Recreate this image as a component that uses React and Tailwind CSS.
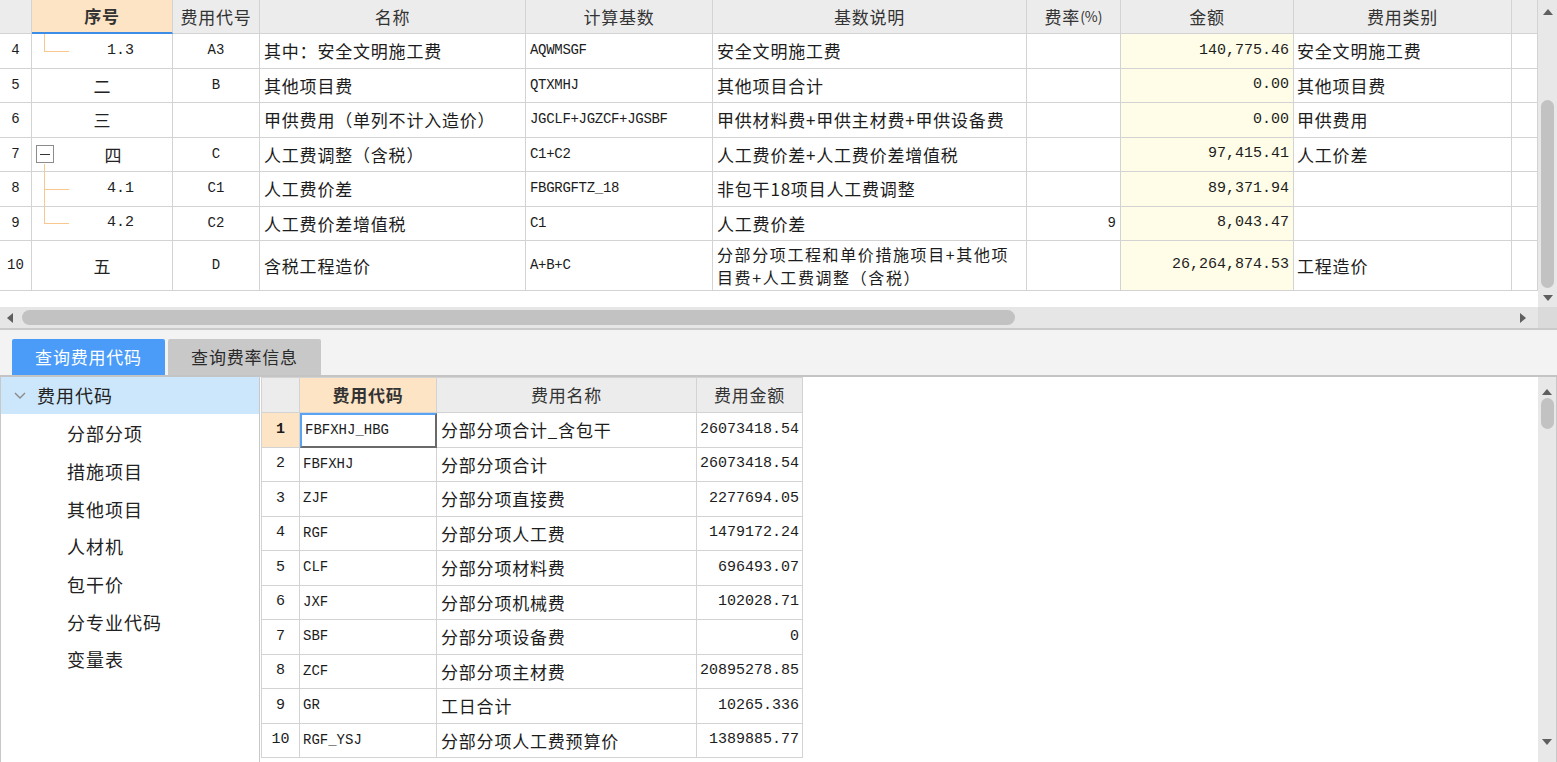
import React from "react";

const sans = "font-['Noto_Sans_CJK_SC',sans-serif]";
const mono = "font-['Liberation_Mono','Noto_Sans_CJK_SC',monospace]";

const topCols =
  "grid grid-cols-[32px_141px_87px_266px_187px_314px_94px_173px_218px_26px]";
const botCols = "grid grid-cols-[39px_137px_260px_106px]";

const Up = () => (
  <svg width="10" height="6" viewBox="0 0 10 6">
    <polygon points="0,6 5,0 10,6" fill="#5f5f5f" />
  </svg>
);
const Down = () => (
  <svg width="10" height="6" viewBox="0 0 10 6">
    <polygon points="0,0 5,6 10,0" fill="#5f5f5f" />
  </svg>
);
const Left = () => (
  <svg width="6" height="10" viewBox="0 0 6 10">
    <polygon points="6,0 0,5 6,10" fill="#5f5f5f" />
  </svg>
);
const Right = () => (
  <svg width="6" height="10" viewBox="0 0 6 10">
    <polygon points="0,0 6,5 0,10" fill="#5f5f5f" />
  </svg>
);

const rows = [
  { n: "4", seq: "1.3", tree: "last", code: "A3", name: "其中：安全文明施工费", base: "AQWMSGF", desc: "安全文明施工费", rate: "", amt: "140,775.46", cat: "安全文明施工费" },
  { n: "5", seq: "二", code: "B", name: "其他项目费", base: "QTXMHJ", desc: "其他项目合计", rate: "", amt: "0.00", cat: "其他项目费" },
  { n: "6", seq: "三", code: "", name: "甲供费用（单列不计入造价）", base: "JGCLF+JGZCF+JGSBF", desc: "甲供材料费+甲供主材费+甲供设备费", rate: "", amt: "0.00", cat: "甲供费用" },
  { n: "7", seq: "四", box: true, code: "C", name: "人工费调整（含税）", base: "C1+C2", desc: "人工费价差+人工费价差增值税", rate: "", amt: "97,415.41", cat: "人工价差" },
  { n: "8", seq: "4.1", tree: "mid", code: "C1", name: "人工费价差", base: "FBGRGFTZ_18", desc: "非包干18项目人工费调整", rate: "", amt: "89,371.94", cat: "" },
  { n: "9", seq: "4.2", tree: "last", code: "C2", name: "人工费价差增值税", base: "C1", desc: "人工费价差", rate: "9", amt: "8,043.47", cat: "" },
  { n: "10", seq: "五", code: "D", name: "含税工程造价", base: "A+B+C", desc: ["分部分项工程和单价措施项目+其他项", "目费+人工费调整（含税）"], rate: "", amt: "26,264,874.53", cat: "工程造价", tall: true },
];

const bot = [
  ["FBFXHJ_HBG", "分部分项合计_含包干", "26073418.54"],
  ["FBFXHJ", "分部分项合计", "26073418.54"],
  ["ZJF", "分部分项直接费", "2277694.05"],
  ["RGF", "分部分项人工费", "1479172.24"],
  ["CLF", "分部分项材料费", "696493.07"],
  ["JXF", "分部分项机械费", "102028.71"],
  ["SBF", "分部分项设备费", "0"],
  ["ZCF", "分部分项主材费", "20895278.85"],
  ["GR", "工日合计", "10265.336"],
  ["RGF_YSJ", "分部分项人工费预算价", "1389885.77"],
];

const treeItems = ["分部分项", "措施项目", "其他项目", "人材机", "包干价", "分专业代码", "变量表"];

const cell = "border-r border-b border-[#d3d3d3] flex items-center overflow-hidden whitespace-nowrap";

function SeqCell({ r }) {
  return (
    <div className={`${cell} relative`}>
      {r.tree && (
        <>
          <span
            className={`absolute left-[12px] top-0 w-px bg-[#f8c88e] ${r.tree === "mid" ? "h-full" : "h-1/2"}`}
          />
          <span className="absolute left-[12px] top-1/2 w-[25px] h-px bg-[#f8c88e]" />
        </>
      )}
      {r.box && <span className="absolute left-[12px] top-[26px] w-px h-[9px] bg-[#f8c88e]" />}
      {r.tree ? (
        <>
          <div className="w-[37px] shrink-0" />
          <div className={`flex-1 text-center ${mono} text-[15px] text-[#222]`}>{r.seq}</div>
        </>
      ) : r.box ? (
        <>
          <div className="w-[22px] shrink-0 flex items-center pl-[4px]">
            <div className="w-[18px] h-[18px] border border-[#8c8c8c] bg-white flex items-center justify-center">
              <div className="w-[10px] h-px bg-[#333]" />
            </div>
          </div>
          <div className={`flex-1 text-center ${sans} text-[17px] text-[#222]`}>{r.seq}</div>
        </>
      ) : (
        <div className={`flex-1 text-center ${sans} text-[17px] text-[#222]`}>{r.seq}</div>
      )}
    </div>
  );
}

export default function App() {
  return (
    <div className={`w-[1557px] h-[762px] overflow-hidden bg-white flex flex-col text-[#1c1c1c] ${sans}`}>
      {/* Top area */}
      <div className="flex h-[307px]">
        <div className="w-[1538px] flex flex-col">
          {/* header */}
          <div className={`${topCols} h-[34px] text-[17px] tracking-[0.8px] text-[#333]`}>
            <div className={`${cell} bg-[#ececec]`} />
            <div className={`${cell} justify-center bg-[#fde4c5] font-bold border-b-2 border-b-[#3c8de6]`}>序号</div>
            <div className={`${cell} justify-center bg-[#ececec]`}>费用代号</div>
            <div className={`${cell} justify-center bg-[#ececec]`}>名称</div>
            <div className={`${cell} justify-center bg-[#ececec]`}>计算基数</div>
            <div className={`${cell} justify-center bg-[#ececec]`}>基数说明</div>
            <div className={`${cell} justify-center bg-[#ececec]`}>
              费率<span className="text-[14px] tracking-normal">(%)</span>
            </div>
            <div className={`${cell} justify-center bg-[#ececec]`}>金额</div>
            <div className={`${cell} justify-center bg-[#ececec]`}>费用类别</div>
            <div className={`${cell} bg-[#ececec]`} />
          </div>
          {rows.map((r) => (
            <div key={r.n} className={`${topCols} ${r.tall ? "h-[50px]" : "h-[34.5px]"}`}>
              <div className={`${cell} justify-center ${mono} text-[14px]`}>{r.n}</div>
              <SeqCell r={r} />
              <div className={`${cell} justify-center ${mono} text-[14px]`}>{r.code}</div>
              <div className={`${cell} pl-[4px] text-[17px] tracking-[0.8px]`}>{r.name}</div>
              <div className={`${cell} pl-[4px] ${mono} text-[14px] tracking-[-0.3px]`}>{r.base}</div>
              <div className={`${cell} pl-[4px] text-[17px] tracking-[0.8px]`}>
                {Array.isArray(r.desc) ? (
                  <div className="flex flex-col text-[16px] tracking-[1.6px] leading-[23px]">
                    <span className="block h-[23px]">{r.desc[0]}</span>
                    <span className="block h-[23px]">{r.desc[1]}</span>
                  </div>
                ) : (
                  r.desc
                )}
              </div>
              <div className={`${cell} justify-end pr-[4px] ${mono} text-[14px]`}>{r.rate}</div>
              <div className={`${cell} justify-end pr-[4px] bg-[#fffde8] ${mono} text-[15px]`}>{r.amt}</div>
              <div className={`${cell} pl-[3px] text-[17px] tracking-[0.8px]`}>{r.cat}</div>
              <div className={`${cell}`} />
            </div>
          ))}
          <div className="flex-1 bg-white" />
        </div>
        {/* vertical scrollbar top */}
        <div className="w-[19px] bg-[#e8e8e8] flex flex-col items-center">
          <div className="h-[24px] flex items-center justify-center">
            <Up />
          </div>
          <div className="h-[76px]" />
          <div className="w-[13px] h-[188px] rounded-full bg-[#c2c2c2]" />
          <div className="flex-1 flex items-center justify-center">
            <Down />
          </div>
        </div>
      </div>

      {/* horizontal scrollbar */}
      <div className="h-[21px] flex bg-[#e6e6e6]">
        <div className="w-[20px] flex items-center justify-center">
          <Left />
        </div>
        <div className="w-[1500px] flex items-center pl-[2px]">
          <div className="w-[993px] h-[15px] rounded-full bg-[#c2c2c2]" />
        </div>
        <div className="w-[18px] flex items-center justify-start">
          <Right />
        </div>
        <div className="w-[19px] bg-[#dadada]" />
      </div>
      <div className="h-[2px] bg-[#cacaca]" />

      {/* tabs */}
      <div className="h-[45px] bg-[#f3f3f3] flex items-end pl-[12px] gap-[3px]">
        <div className="w-[153px] h-[36px] rounded-t-[2px] bg-[#4b9cf9] text-white text-[17px] tracking-[0.8px] flex items-center justify-center">
          查询费用代码
        </div>
        <div className="w-[153px] h-[36px] rounded-t-[2px] bg-[#c8c8c8] text-[#2a2a2a] text-[17px] tracking-[0.8px] flex items-center justify-center">
          查询费率信息
        </div>
      </div>
      <div className="h-[2px] bg-[#c4c4c4]" />

      {/* bottom */}
      <div className="flex-1 flex min-h-0">
        {/* tree */}
        <div className="w-[260px] border-l border-r border-[#c8c8c8] bg-white flex flex-col">
          <div className="h-[37px] bg-[#cce6fc] flex items-center text-[18px] tracking-[1px] text-[#222]">
            <div className="w-[36px] flex items-center justify-center pl-[2px]">
              <svg width="12" height="8" viewBox="0 0 12 8">
                <polyline points="1,1 6,6 11,1" fill="none" stroke="#8a8a8a" strokeWidth="1.4" />
              </svg>
            </div>
            费用代码
          </div>
          <div className="h-[1px]" />
          {treeItems.map((t) => (
            <div key={t} className="h-[37.7px] flex items-center pl-[66px] text-[18px] tracking-[1px] text-[#222]">
              {t}
            </div>
          ))}
        </div>

        {/* grid */}
        <div className="flex-1 pl-[1px] bg-white">
          <div className="w-[542px]">
            <div className={`${botCols} h-[36px] border-t border-[#d3d3d3] text-[17px] tracking-[0.8px] text-[#333]`}>
              <div className={`${cell} border-l bg-[#ececec]`} />
              <div className={`${cell} justify-center bg-[#fde4c5] font-bold`}>费用代码</div>
              <div className={`${cell} justify-center bg-[#ececec]`}>费用名称</div>
              <div className={`${cell} justify-center bg-[#ececec]`}>费用金额</div>
            </div>
            {bot.map((b, i) => (
              <div key={b[0]} className={`${botCols} h-[34.5px]`}>
                <div
                  className={`${cell} border-l justify-center ${mono} text-[15px] ${
                    i === 0 ? "bg-[#fde4c5] font-bold" : "bg-white"
                  }`}
                >
                  {i + 1}
                </div>
                <div
                  className={`${cell} pl-[3px] ${mono} text-[14px] ${
                    i === 0
                      ? "border-t-2 border-l-2 border-r-2 border-b-2 border-t-[#5aa2f2] border-l-[#5aa2f2] border-r-[#6a6a6a] border-b-[#6a6a6a] pl-[2px]"
                      : ""
                  }`}
                >
                  {b[0]}
                </div>
                <div className={`${cell} pl-[4px] text-[17px] tracking-[0.8px]`}>{b[1]}</div>
                <div className={`${cell} justify-end pr-[3px] ${mono} text-[15px]`}>{b[2]}</div>
              </div>
            ))}
          </div>
        </div>

        {/* bottom vertical scrollbar */}
        <div className="w-[19px] bg-[#e8e8e8] border-r border-[#c8c8c8] flex flex-col items-center">
          <div className="h-[20px] flex items-end justify-center pb-[2px]">
            <Up />
          </div>
          <div className="w-[13px] h-[31px] mt-[1px] rounded-full bg-[#c2c2c2]" />
          <div className="flex-1" />
          <div className="h-[20px] flex items-start justify-center pt-[1px]">
            <Down />
          </div>
          <div className="h-[4px]" />
        </div>
      </div>
    </div>
  );
}
